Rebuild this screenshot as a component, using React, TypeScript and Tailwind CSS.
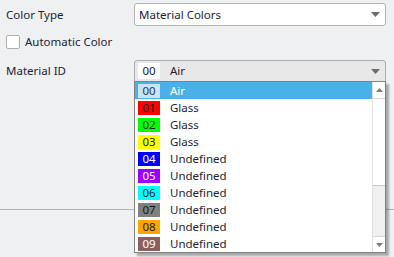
import React from "react";

const materials = [
  { id: "00", name: "Air", bg: "bg-white", fg: "text-[#1a1a1a]" },
  { id: "01", name: "Glass", bg: "bg-[#ff0000]", fg: "text-[#1a1a1a]" },
  { id: "02", name: "Glass", bg: "bg-[#00ff00]", fg: "text-[#1a1a1a]" },
  { id: "03", name: "Glass", bg: "bg-[#ffff00]", fg: "text-[#1a1a1a]" },
  { id: "04", name: "Undefined", bg: "bg-[#0000ff]", fg: "text-white" },
  { id: "05", name: "Undefined", bg: "bg-[#a000ff]", fg: "text-white" },
  { id: "06", name: "Undefined", bg: "bg-[#00ffff]", fg: "text-[#1a1a1a]" },
  { id: "07", name: "Undefined", bg: "bg-[#808080]", fg: "text-[#1a1a1a]" },
  { id: "08", name: "Undefined", bg: "bg-[#ffa500]", fg: "text-[#1a1a1a]" },
  { id: "09", name: "Undefined", bg: "bg-[#8c5f5f]", fg: "text-white" },
];

function Caret() {
  return (
    <svg width="9" height="5" viewBox="0 0 9 5" className="mr-[5px]">
      <path d="M0 0 H9 L4.5 5 Z" fill="#6b6b6b" />
    </svg>
  );
}

function ScrollArrow({ up }: { up?: boolean }) {
  return (
    <svg width="7" height="4" viewBox="0 0 7 4">
      <path d={up ? "M0 4 H7 L3.5 0 Z" : "M0 0 H7 L3.5 4 Z"} fill="#7a7a7a" />
    </svg>
  );
}

export default function App() {
  return (
    <div
      className="w-[394px] h-[257px] bg-[#eff0f2] text-[11.5px] text-[#1c2433] overflow-hidden"
      style={{ fontFamily: '"Noto Sans", "Open Sans", sans-serif' }}
    >
      {/* Color type */}
      <div className="flex items-center pt-[3px]">
        <div className="w-[134px] pl-[6px]">Color Type</div>
        <div className="w-[252px] h-[23px] bg-white border border-[#b3b3b3] rounded-[3px] flex items-center justify-between pl-[4px]">
          <span>Material Colors</span>
          <Caret />
        </div>
      </div>

      {/* Automatic color */}
      <div className="flex items-center mt-[9px] pl-[6px] h-[14px]">
        <div className="w-[14px] h-[14px] bg-white border border-[#b0b0b0] rounded-[2px]" />
        <span className="ml-[5px]">Automatic Color</span>
      </div>

      {/* Material ID */}
      <div className="flex items-center mt-[11px]">
        <div className="w-[134px] pl-[6px]">Material ID</div>
        <div className="relative w-[252px]">
          <div className="h-[22px] bg-[#e8e8e8] border border-[#acacac] rounded-t-[3px] flex items-center justify-between pl-[3px]">
            <div className="flex items-center">
              <span className="w-[22px] h-[16px] bg-white flex items-center justify-center">00</span>
              <span className="ml-[10px]">Air</span>
            </div>
            <Caret />
          </div>

          {/* Popup list */}
          <div className="absolute left-0 top-[21px] w-[252px] h-[172px] bg-white border border-[#828282] shadow-[3px_3px_2px_rgba(0,0,0,0.3)] flex z-10">
            <div className="flex-1 flex flex-col">
              {materials.map((m, i) => (
                <div
                  key={m.id}
                  className={`h-[17px] flex items-center pl-[3px] ${i === 0 ? "bg-[#49b1e8] text-white" : ""}`}
                >
                  <span
                    className={`w-[22px] h-[14px] flex items-center justify-center leading-none ${
                      i === 0 ? "bg-[#c6e5f8] text-[#2a3a4a]" : `${m.bg} ${m.fg}`
                    }`}
                  >
                    {m.id}
                  </span>
                  <span className="ml-[10px]">{m.name}</span>
                </div>
              ))}
            </div>
            {/* Scrollbar */}
            <div className="w-[13px] flex flex-col border-l border-[#e0e0e0] bg-[#f0f0f0]">
              <div className="h-[17px] bg-white border-b border-[#d6d6d6] flex items-center justify-center">
                <ScrollArrow up />
              </div>
              <div className="h-[87px] bg-white border-b border-[#c8c8c8]" />
              <div className="flex-1" />
              <div className="h-[16px] bg-white border-t border-[#d6d6d6] flex items-center justify-center">
                <ScrollArrow />
              </div>
            </div>
          </div>
        </div>
      </div>

      {/* Divider */}
      <div className="mt-[127px] h-px bg-[#b4b4b4]" />
    </div>
  );
}
